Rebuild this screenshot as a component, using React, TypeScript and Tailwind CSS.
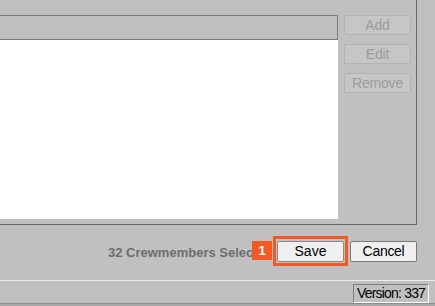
import React from 'react';

const SideButton: React.FC<{ label: string }> = ({ label }) => (
    <button
        disabled
        className="w-[67px] h-[20px] rounded-[2px] border border-[#b2b2b2] bg-[#c6c6c6] text-[14px] leading-[18px] text-[#9b9b9b] tracking-[-0.2px]"
    >
        {label}
    </button>
);

const App: React.FC = () => {
    return (
        <div className="w-[435px] h-[306px] overflow-hidden bg-[#c0c0c0] flex flex-col font-['Liberation_Sans',Arial,sans-serif]">
            {/* Crew panel */}
            <div className="w-[417px] h-[225px] flex pt-[15px] border-r border-b border-[#676767]">
                <div className="w-[338px] flex flex-col">
                    <div className="h-[25px] border-t border-b border-r border-[#7c7c7c] bg-[#c0c0c0]"></div>
                    <div className="h-[179px] bg-white"></div>
                </div>
                <div className="ml-[6px] flex flex-col gap-[9px]">
                    <SideButton label="Add" />
                    <SideButton label="Edit" />
                    <SideButton label="Remove" />
                </div>
            </div>

            {/* Action row */}
            <div className="h-[55px] flex items-start justify-end pt-[11px] pr-[18px]">
                <div className="h-[30px] flex items-center">
                    <span className="w-[144px] overflow-hidden text-[13px] font-bold text-[#6e6e6e] whitespace-nowrap leading-[21px] pt-[3px]">
                        32 Crewmembers Selected
                    </span>
                    <span className="w-[20px] h-[19px] mb-[1px] bg-[#f15a24] text-white text-[13px] font-bold flex items-center justify-center">
                        1
                    </span>
                    <div className="ml-[1px] w-[75px] h-[30px] border-[3px] border-[#f15a24] flex items-center justify-center pt-[1px]">
                        <button className="w-[67px] h-[21px] rounded-[2px] border border-[#8a8a8a] bg-[#f0f0f0] text-[14px] leading-[19px] text-black">
                            Save
                        </button>
                    </div>
                    <button className="ml-[2px] mt-[1px] w-[67px] h-[21px] rounded-[2px] border border-[#7a7a7a] bg-[#f0f0f0] text-[14px] leading-[19px] text-black tracking-[-0.3px]">
                        Cancel
                    </button>
                </div>
            </div>

            {/* Status bar */}
            <div className="h-[23px] border-t border-[#ececec] flex justify-end pt-[3px] pr-[6px]">
                <div className="w-[76px] h-[19px] border-t border-l border-[#7f7f7f] border-b border-r border-b-white border-r-white flex items-center justify-center text-[14px] leading-[17px] text-black tracking-[-0.8px] whitespace-nowrap">
                    Version: 337
                </div>
            </div>
            <div className="h-[3px] border-t border-[#8c8c8c] bg-[#a9a9a9]"></div>
        </div>
    );
};

export default App;
